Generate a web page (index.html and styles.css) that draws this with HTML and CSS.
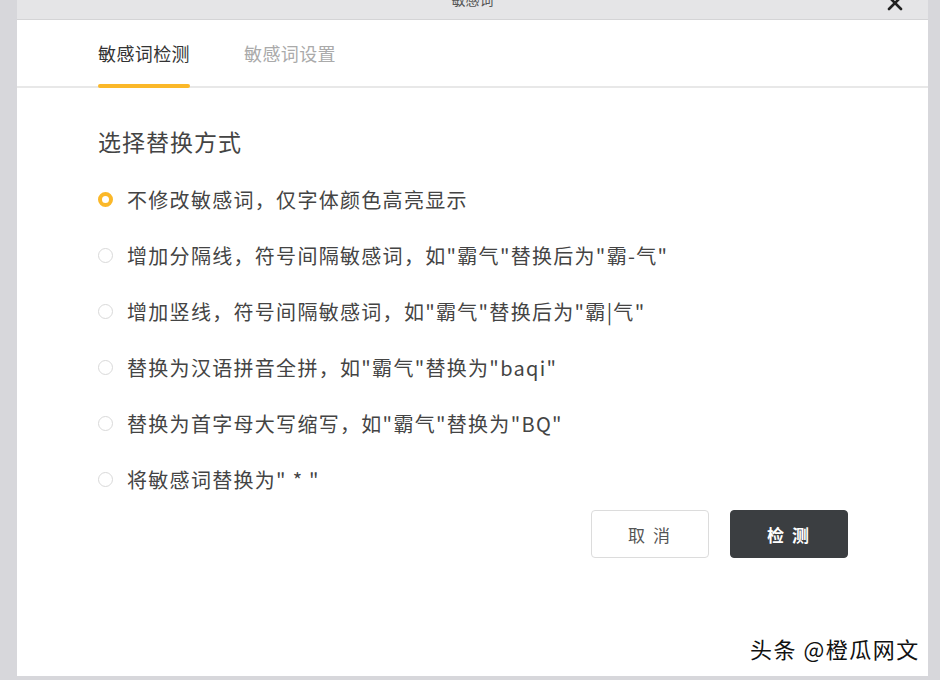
FILE: index.html
```html
<!DOCTYPE html>
<html>
<head>
    <meta charset="utf-8">
    <link rel="stylesheet" href="styles.css">
</head>
<body>
    <div class="dialog">
        <div class="dialog-header">
            <span class="dialog-title">敏感词</span>
            <span class="dialog-close">
                <svg viewBox="0 0 16 16" width="16" height="16">
                    <path d="M2 2 L14 14 M14 2 L2 14" stroke="#222" stroke-width="2.6" stroke-linecap="round"/>
                </svg>
            </span>
        </div>

        <div class="tabs">
            <div class="tab active">敏感词检测</div>
            <div class="tab">敏感词设置</div>
        </div>

        <div class="content">
            <h3 class="section-title">选择替换方式</h3>
            <ul class="options">
                <li class="option checked"><span class="radio"></span>不修改敏感词，仅字体颜色高亮显示</li>
                <li class="option"><span class="radio"></span>增加分隔线，符号间隔敏感词，如"霸气"替换后为"霸-气"</li>
                <li class="option"><span class="radio"></span>增加竖线，符号间隔敏感词，如"霸气"替换后为"霸|气"</li>
                <li class="option"><span class="radio"></span>替换为汉语拼音全拼，如"霸气"替换为"baqi"</li>
                <li class="option"><span class="radio"></span>替换为首字母大写缩写，如"霸气"替换为"BQ"</li>
                <li class="option"><span class="radio"></span>将敏感词替换为" * "</li>
            </ul>
            <div class="actions">
                <button class="btn btn-cancel">取 消</button>
                <button class="btn btn-primary">检 测</button>
            </div>
        </div>
    </div>

    <div class="watermark">头条 @橙瓜网文</div>
</body>
</html>
```

FILE: styles.css
```css
body {
    font-family: "Noto Sans CJK SC", "Microsoft YaHei", sans-serif;
    margin: 0;
    padding: 0 12px 0 17px;
    height: 680px;
    overflow: hidden;
    background: #d7d7db;
    color: #333;
}

.dialog {
    margin-top: -21px;
    height: 697px;
    background: white;
    display: flex;
    flex-direction: column;
}

.dialog-header {
    height: 40px;
    background: #e5e5e7;
    border-bottom: 1px solid #d4d4d6;
    display: flex;
    align-items: center;
    justify-content: center;
    position: relative;
    font-size: 14px;
    color: #555;
}

.dialog-close {
    position: absolute;
    right: 25px;
    top: 16px;
    width: 16px;
    height: 16px;
}

.tabs {
    height: 66px;
    display: flex;
    gap: 54px;
    padding-left: 81px;
    border-bottom: 2px solid #e8e8e8;
}

.tab {
    font-size: 18px;
    letter-spacing: 0.4px;
    color: #aaa;
    line-height: 66px;
    height: 66px;
    box-sizing: border-box;
    position: relative;
}

.tab.active {
    color: #333;
}

.tab.active::after {
    content: "";
    position: absolute;
    left: 0;
    right: 0;
    bottom: -2px;
    height: 4px;
    border-radius: 2px;
    background: #fbb829;
}

.content {
    padding: 37px 80px 0 81px;
}

.section-title {
    margin: 0 0 14px;
    font-size: 23px;
    font-weight: normal;
    letter-spacing: 1px;
    line-height: 32px;
    color: #444;
}

.options {
    list-style: none;
    margin: 0;
    padding: 0;
}

.option {
    display: flex;
    align-items: center;
    height: 56px;
    font-size: 20px;
    letter-spacing: 1.3px;
    color: #444;
}

.radio {
    width: 15px;
    height: 15px;
    border: 1.5px solid #d9d9d9;
    border-radius: 50%;
    margin-right: 14px;
    box-sizing: border-box;
    flex-shrink: 0;
}

.option.checked .radio {
    border: 4px solid #fbb829;
}

.actions {
    display: flex;
    justify-content: flex-end;
    gap: 21px;
    margin-top: 3px;
}

.btn {
    width: 118px;
    height: 48px;
    border-radius: 4px;
    font-family: inherit;
    font-size: 17px;
    letter-spacing: 2px;
    cursor: pointer;
}

.btn-cancel {
    background: white;
    border: 1px solid #dcdcdc;
    color: #555;
}

.btn-primary {
    background: #3b3e41;
    border: 1px solid #3b3e41;
    color: white;
    font-weight: bold;
}

.watermark {
    position: absolute;
    left: 750px;
    top: 632px;
    font-size: 22px;
    line-height: 32px;
    color: #111;
    text-shadow: 1px 1px 1px white, -1px -1px 1px white;
    letter-spacing: 1.5px;
}
```
